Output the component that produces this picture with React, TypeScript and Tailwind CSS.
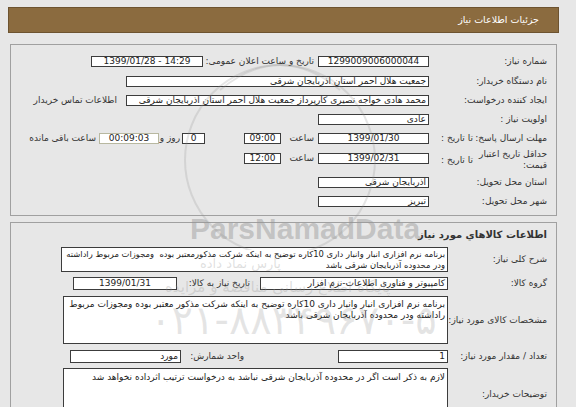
import React from "react";

const F = { fontFamily: '"DejaVu Sans", Tahoma, sans-serif' };

function Box({ w, children, center = false, h = "h-[11px]", cls = "" }: { w: string; children?: React.ReactNode; center?: boolean; h?: string; cls?: string }) {
  return (
    <div
      className={`${w} ${h} shrink-0 border border-[#3c3c3c] bg-white flex items-center overflow-hidden whitespace-nowrap px-[2px] text-[9px] leading-none text-[#222] ${center ? "justify-center" : "justify-start"} ${cls}`}
    >
      {children}
    </div>
  );
}

function Label({ children, w = "w-[127px]" }: { children: React.ReactNode; w?: string }) {
  return <div className={`${w} shrink-0 whitespace-nowrap pr-[9px] text-[9px] leading-[11px] text-[#333]`}>{children}</div>;
}

function T({ children, cls = "" }: { children: React.ReactNode; cls?: string }) {
  return <div className={`shrink-0 whitespace-nowrap text-[9px] leading-[11px] text-[#333] ${cls}`}>{children}</div>;
}

export default function App() {
  return (
    <div dir="rtl" style={F} className="relative w-[576px] h-[407px] overflow-hidden bg-[#e7e7e7] pt-[7px]">
      <div className="mr-[17px] ml-[8px]">
        {/* header */}
        <div className="h-[26px] bg-[#8b6b3f] border border-[#6d5330] flex items-center pr-[19px] text-white text-[9.5px] whitespace-nowrap">
          جزئیات اطلاعات نیاز
        </div>

        {/* panel 1 */}
        <div className="mt-[11px] mx-[2px] border border-[#a0a0a0] pt-[7px] pb-[4px]">
          <div className="flex items-center h-[19px]">
            <Label>شماره نیاز:</Label>
            <Box w="w-[111px]" center>1299009006000044</Box>
            <T cls="w-[115px] pr-[4px]">تاریخ و ساعت اعلان عمومی:</T>
            <Box w="w-[112px]" center>
              <span dir="ltr">1399/01/28 - 14:29</span>
            </Box>
          </div>
          <div className="flex items-center h-[20px]">
            <Label>نام دستگاه خریدار:</Label>
            <Box w="w-[303px]">جمعیت هلال احمر استان آذربایجان شرقی</Box>
          </div>
          <div className="flex items-center h-[19px]">
            <Label>ایجاد کننده درخواست:</Label>
            <Box w="w-[303px]" cls="text-[8.6px]">محمد هادی خواجه نصیری کارپرداز جمعیت هلال احمر استان آذربایجان شرقی</Box>
            <T cls="pr-[9px] text-[#2b2ba6]">اطلاعات تماس خریدار</T>
          </div>
          <div className="flex items-center h-[19px]">
            <Label>اولویت نیاز :</Label>
            <Box w="w-[111px]">عادی</Box>
          </div>
          <div className="flex items-center h-[19px]">
            <T cls="w-[83px] pr-[9px]">مهلت ارسال پاسخ:</T>
            <T cls="w-[44px]">تا تاریخ :</T>
            <Box w="w-[111px]" center>1399/01/30</Box>
            <T cls="w-[37px] pr-[4px]">ساعت</T>
            <Box w="w-[37px]" center>09:00</Box>
            <div className="w-[39px] shrink-0" />
            <Box w="w-[23px]" center>0</Box>
            <T cls="w-[23px] pr-[2px]">روز و</T>
            <Box w="w-[60px]" center cls="bg-[#efefc4] text-[#7c7c54] border-[#b8b8a0]">00:09:03</Box>
            <T cls="pr-[3px]">ساعت باقی مانده</T>
          </div>
          <div className="flex items-center h-[24px]">
            <T cls="w-[83px] pr-[9px]">
              حداقل تاریخ اعتبار
              <br />
              قیمت:
            </T>
            <T cls="w-[44px]">تا تاریخ :</T>
            <Box w="w-[111px]" center cls="-mt-[3px]">1399/02/31</Box>
            <T cls="w-[37px] pr-[4px] -mt-[3px]">ساعت</T>
            <Box w="w-[37px]" center cls="-mt-[3px]">12:00</Box>
          </div>
          <div className="flex items-center h-[20px]">
            <Label>استان محل تحویل:</Label>
            <Box w="w-[111px]">آذربایجان شرقی</Box>
          </div>
          <div className="flex items-center h-[19px]">
            <Label>شهر محل تحویل:</Label>
            <Box w="w-[111px]">تبریز</Box>
          </div>
        </div>

        {/* panel 2 */}
        <div className="mt-[6px] mx-[2px] border border-[#a0a0a0] pt-[3px] h-[200px]">
          <div className="pr-[9px] h-[17px] flex items-center whitespace-nowrap text-[10px] font-bold text-[#333]">اطلاعات کالاهاي مورد نیاز</div>
          <div className="flex items-center mt-[4px]">
            <Label w="w-[108px]">شرح کلی نیاز:</Label>
            <div className="w-[387px] h-[25px] shrink-0 border border-[#3c3c3c] bg-white px-[2px] pt-[1px] text-[8.4px] tracking-[-0.2px] leading-[11px] text-[#222] overflow-hidden whitespace-nowrap">
              برنامه نرم افزاری انبار وانبار داری 10کاره توضیح به اینکه شرکت مذکورمعتبر بوده&nbsp; ومجوزات مربوط راداشته
              <br />
              ودر محدوده آذربایجان شرقی باشد
            </div>
          </div>
          <div className="flex items-center h-[19px] mt-[2px]">
            <Label w="w-[108px]">گروه کالا:</Label>
            <Box w="w-[188px]" h="h-[13px]">کامپیوتر و فناوری اطلاعات-نرم افزار</Box>
            <T cls="w-[83px] pr-[10px]">تاریخ نیاز به کالا:</T>
            <Box w="w-[104px]" h="h-[13px]" center>1399/01/31</Box>
          </div>
          <div className="flex items-center mt-[3px]">
            <Label w="w-[108px]">مشخصات کالای مورد نیاز:</Label>
            <div className="w-[385px] h-[48px] shrink-0 border border-[#3c3c3c] bg-white px-[2px] pt-[2px] text-[9px] leading-[11px] text-[#222] overflow-hidden">
              برنامه نرم افزاری انبار وانبار داری 10کاره توضیح به اینکه شرکت مذکور معتبر بوده ومجوزات مربوط راداشته ودر محدوده آذربایجان شرقی باشد
            </div>
          </div>
          <div className="flex items-center h-[19px] mt-[3px]">
            <Label w="w-[108px]">تعداد / مقدار مورد نیاز:</Label>
            <Box w="w-[110px]" h="h-[13px]">1</Box>
            <T cls="w-[157px] pr-[94px]">واحد شمارش:</T>
            <Box w="w-[111px]" h="h-[13px]">مورد</Box>
          </div>
          <div className="flex items-start mt-[2px]">
            <T cls="w-[108px] pr-[9px] pt-[21px]">توضیحات خریدار:</T>
            <div className="w-[385px] h-[60px] shrink-0 border border-[#3c3c3c] bg-white px-[2px] pt-[3px] text-[9px] leading-[11px] text-[#222]">
              لازم به ذکر است اگر در محدوده آذربایجان شرقی نباشد به درخواست ترتیب اثرداده نخواهد شد
            </div>
          </div>
        </div>
      </div>

      {/* watermark */}
      <div className="pointer-events-none absolute inset-0">
        <svg className="absolute left-[150px] top-[50px]" width="260" height="200" viewBox="0 0 260 200">
          <circle cx="130" cy="110" r="95" fill="none" stroke="rgba(140,140,140,0.22)" strokeWidth="2" />
          <path d="M70 40 Q130 -10 190 40" fill="none" stroke="rgba(140,140,140,0.22)" strokeWidth="2" />
        </svg>
        <div dir="ltr" className="absolute left-[190px] top-[214px] text-[30px] font-bold leading-none text-[rgba(150,150,150,0.45)]" style={{ fontFamily: '"Liberation Sans", sans-serif' }}>
          ParsNamadData
        </div>
        <div className="absolute left-[200px] top-[257px] whitespace-nowrap text-[13px] leading-none text-[rgba(150,150,150,0.3)]">پارس نماد داده</div>
        <div className="absolute left-[165px] top-[280px] whitespace-nowrap text-[15px] leading-none text-[rgba(150,150,150,0.3)]">پایگاه اطلاع رسانی مناقصه و مزایده</div>
        <div dir="ltr" className="absolute left-[150px] top-[300px] whitespace-nowrap text-[40px] leading-none text-[rgba(150,150,150,0.25)]">۰۲۱-۸۸۳۴۹۶۷۰-۵</div>
      </div>
    </div>
  );
}
